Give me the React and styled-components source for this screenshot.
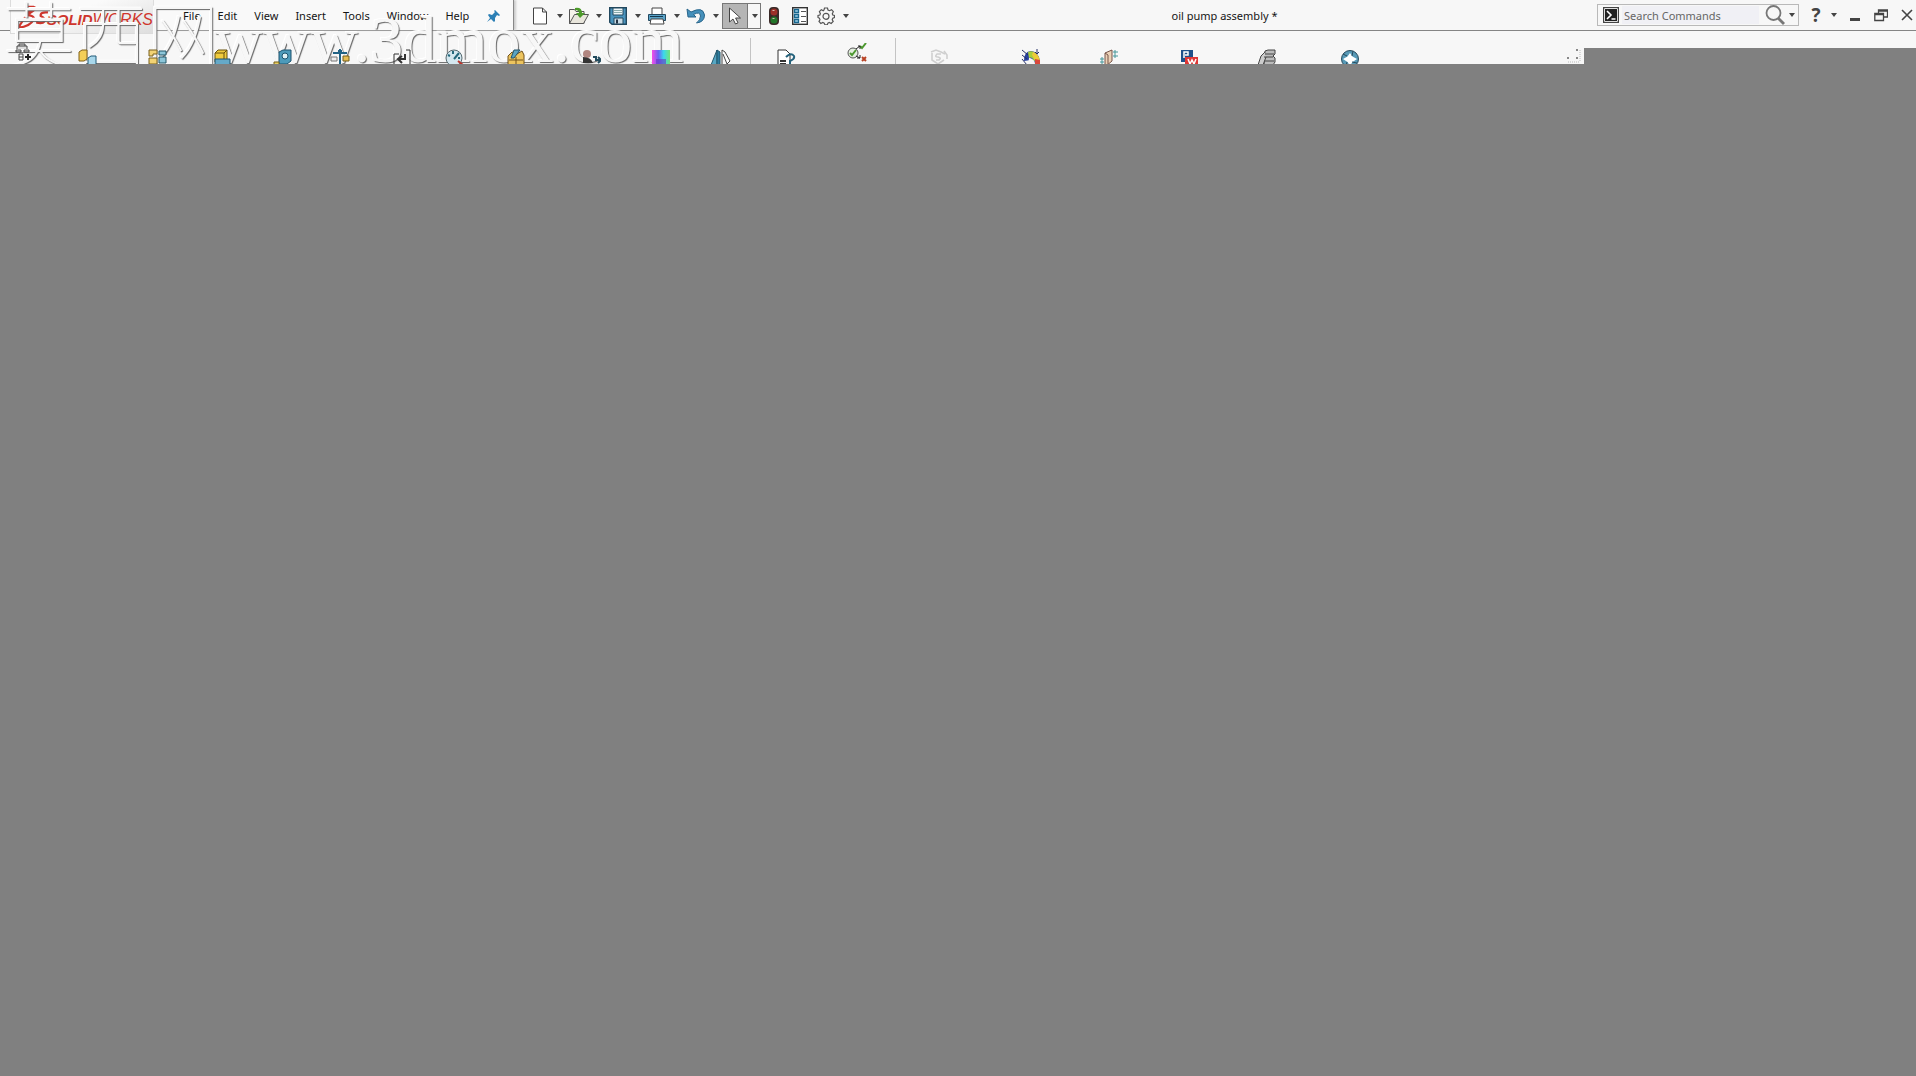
import React from "react";
import styled, { createGlobalStyle } from "styled-components";

const App = () => {
  return (
    <Page>
      <GlobalStyle />
      <Header>
        <Logo href="#home" aria-label="SolidWorks">
          <BrandMark />
          <Brand>
            <b>SOLID</b>
            <span>WORKS</span>
          </Brand>
        </Logo>
        <MenuBar>
          {menus.map((menu) => (
            <MenuButton key={menu}>{menu}</MenuButton>
          ))}
          <PinButton aria-label="Pin menu">
            <PinIcon />
          </PinButton>
        </MenuBar>

        <QuickTools>
          {quickTools.map(({ name, icon, active }) => (
            <Split key={name} $active={active}>
              <IconButton aria-label={name}>{icon}</IconButton>
              <Caret label={`${name} options`} />
            </Split>
          ))}
          <IconButton aria-label="Rebuild">{trafficIcon}</IconButton>
          <IconButton aria-label="File properties">{listIcon}</IconButton>
          <IconButton aria-label="Options">{gearIcon}</IconButton>
          <Caret label="Options menu" />
        </QuickTools>

        <Title>oil pump assembly *</Title>

        <SearchBox>
          {consoleIcon}
          <SearchInput aria-label="Search Commands" placeholder="Search Commands" />
          <SearchButton aria-label="Search">{searchIcon}</SearchButton>
          <Caret label="Search options" />
        </SearchBox>
        <HelpButton aria-label="Help">?</HelpButton>
        <Caret label="Help options" />
        <WindowButtons>
          <WindowButton aria-label="Minimize">
            <svg width="14" height="14">
              <path d="M2 11.5h10" stroke="#444" strokeWidth="3" />
            </svg>
          </WindowButton>
          <WindowButton aria-label="Restore">
            <svg width="14" height="14" fill="none" stroke="#444" strokeWidth="1.3">
              <path d="M4.5 5V2h9v7H10M4.5 3h9" />
              <path d="M.8 5.5h8.7v7H.8zM.8 6.5h8.7" />
            </svg>
          </WindowButton>
          <WindowButton aria-label="Close">
            <svg width="14" height="14">
              <path d="M2 2l10 10M12 2L2 12" stroke="#444" strokeWidth="1.6" />
            </svg>
          </WindowButton>
        </WindowButtons>
      </Header>

      <Ribbon>
        <RibbonTools>
          {ribbonTools.map((tool, i) =>
            tool.divider ? (
              <Divider key={i} $space={tool.space} />
            ) : (
              <RibbonButton
                key={i}
                aria-label={tool.name}
                $width={tool.width}
                $raised={tool.raised}
              >
                <svg width="20" height="20" viewBox="0 0 20 20" fill="none">
                  {tool.art}
                </svg>
              </RibbonButton>
            )
          )}
          <Grip width="18" height="16" viewBox="0 0 18 16">
            <path
              d="M10 1l2 2m0-2l-2 2M10 9l2 2m0-2l-2 2M1 9l2 2m0-2l-2 2"
              stroke="#888"
            />
            <path d="M14 2v12M2 14h12" stroke="#bbb" strokeDasharray="1 1" />
          </Grip>
        </RibbonTools>
        <Dock />
      </Ribbon>

      <Watermark>
        <span>莫西网</span>
        <span>www.3dmox.com</span>
      </Watermark>
    </Page>
  );
};

const Caret = ({ label }) => (
  <CaretButton aria-label={label}>
    <svg width="6" height="4">
      <path d="M0 0h6L3 4z" fill="#444" />
    </svg>
  </CaretButton>
);

const BrandMark = () => (
  <svg width="36" height="28" viewBox="0 0 36 28" fill="none" stroke="#cf352c">
    <path d="M8 3l9 0q4 1 0 4l-6 4M15 5l-5 6" strokeWidth="2.6" />
    <path d="M9 12q10 0 8 5-3 7-17 9l8-12" strokeWidth="2.4" />
    <path d="M33 9q-9-1-8 4 6 3 4 6-2 3-9 1" strokeWidth="2.4" />
    <path d="M16 14l7 7" strokeWidth="2" />
  </svg>
);

const PinIcon = () => (
  <svg width="14" height="14" viewBox="0 0 14 14">
    <path
      d="M8 1l5 5-1 1-2-1-2 3 0 3-1 1-3-3-4 3 3-4-2-3 1-1 3 1 3-3-1-1z"
      fill="#2b7fb5"
    />
  </svg>
);

const trafficIcon = (
  <svg width="14" height="20" viewBox="0 0 14 20">
    <rect x="2" y="1" width="10" height="18" rx="4" fill="#3a2a28" />
    <circle cx="7" cy="6" r="3.5" fill="#9b3028" />
    <circle cx="7" cy="14" r="3.5" fill="#23762a" />
    <path d="M5.5 4.5h2M5.5 12.5h2" stroke="#d7bdb0" />
  </svg>
);

const listIcon = (
  <svg width="16" height="18" viewBox="0 0 16 18" fill="none">
    <rect x=".7" y=".7" width="14.6" height="16.6" fill="#fff" stroke="#333" strokeWidth="1.4" />
    <path
      d="M2.5 2.5h4v3h-4zM2.5 7.5h4v3h-4zM2.5 12.5h4v3h-4z"
      fill="#a5d4ea"
      stroke="#17668e"
      strokeWidth="1.4"
    />
    <path d="M9 4.5h5M9 9.5h5M9 14.5h5" stroke="#555" />
  </svg>
);

const gearIcon = (
  <svg width="18" height="18" viewBox="0 0 18 18" fill="none" stroke="#555" strokeWidth="1.2">
    <path d="M7.5 1h3l.5 2 1.5.7 2-1 1.8 2-1 2 .5 1.3 1.7.5v2l-1.7.7-.6 1.5 1 1.8-2 2-2-1-1.3.6-.6 1.7H7.9l-.7-1.7-1.4-.6-2 1-1.8-2 1-1.9-.6-1.4L1 10.5v-2L2.9 8l.5-1.4-1-1.9 1.9-2 2 1L7 3z" />
    <circle cx="9" cy="9.3" r="3" />
  </svg>
);

const consoleIcon = (
  <svg width="16" height="16" viewBox="0 0 16 16" fill="none" aria-hidden="true">
    <rect x=".5" y=".5" width="15" height="15" fill="#222" stroke="#444" />
    <path d="M1.5 14.5v-13h13v13z" stroke="#ddd" />
    <path d="M4 4l4 4-4 4M8.500 12h4" stroke="#fff" strokeWidth="1.6" />
  </svg>
);

const searchIcon = (
  <svg width="20" height="20" viewBox="0 0 20 20" fill="none" stroke="#777">
    <circle cx="8.5" cy="8" r="7" strokeWidth="1.8" />
    <path d="M13 13l6 6" strokeWidth="2.8" />
  </svg>
);

const menus = ["File", "Edit", "View", "Insert", "Tools", "Window", "Help"];

const quickTools = [
  {
    name: "New",
    icon: (
      <svg width="16" height="18" viewBox="0 0 16 18">
        <path d="M1.5 1h9l4 4v12h-13zM10.500 1v4h4" fill="#fff" stroke="#444" />
      </svg>
    ),
  },
  {
    name: "Open",
    icon: (
      <svg width="22" height="18" viewBox="0 0 22 18">
        <path d="M1.5 16.5v-14h5l1.5 2h8v12z" fill="#f6f3ea" stroke="#555" />
        <path d="M1.5 16.5l5-9h14l-5 9z" fill="#e9e6dc" stroke="#555" />
        <path d="M7 1q7-1 7 5h3l-5 5-4-5h3q0-3-4-3z" fill="#4c9a2a" />
      </svg>
    ),
  },
  {
    name: "Save",
    icon: (
      <svg width="18" height="18" viewBox="0 0 18 18">
        <path d="M.7.7h16.6v16.6H3l-2.300-2z" fill="#4a94be" stroke="#22485f" strokeWidth="1.4" />
        <path d="M4 1h10v7H4z" fill="#eef6fa" stroke="#22485f" />
        <path d="M5 3.5h8M5 5.5h8" stroke="#8aa" />
        <path d="M5 11h9v6H5z" fill="#c9dbe6" stroke="#22485f" />
        <path d="M7 12.5h2v4H7z" fill="#234" />
      </svg>
    ),
  },
  {
    name: "Print",
    icon: (
      <svg width="20" height="18" viewBox="0 0 20 18">
        <path d="M5 7V1h10v6" fill="#fff" stroke="#444" />
        <path d="M1.5 7.5h17v6h-17z" fill="#5aa3c8" stroke="#22485f" />
        <path d="M3 9.5h13" stroke="#17384c" />
        <path d="M4 12h12l1 5H3z" fill="#fff" stroke="#444" />
      </svg>
    ),
  },
  {
    name: "Undo",
    icon: (
      <svg width="20" height="18" viewBox="0 0 20 18">
        <path
          d="M1 2l1 8h8L7.5 7.5Q14 4 14.5 9q0 4-4 7 8-1 8-8Q17-1 5 5z"
          fill="#4590bb"
          stroke="#28658b"
        />
      </svg>
    ),
  },
  {
    name: "Select",
    active: true,
    icon: (
      <svg width="14" height="18" viewBox="0 0 14 18">
        <path d="M1.5 1v14l3.5-3 2.5 5 2.5-1.2-2.4-4.8h4.9z" fill="#fff" stroke="#444" />
      </svg>
    ),
  },
];

// widths run from one icon's left edge to the next
const ribbonTools = [
  {
    name: "Edit component",
    width: 64,
    raised: true,
    art: (
      <g stroke="#444">
        <path d="M3 6V3h10v3M5 3V1h6v2M2 7h5v2H2zM10 7h5v2h-5z" fill="#ddd" />
        <path d="M5 11h4v6H5zM5 14h4" />
        <path d="M11 14h6M14 11v6" strokeWidth="2" stroke="#222" />
      </g>
    ),
  },
  {
    name: "Insert components",
    width: 70,
    art: (
      <g>
        <path d="M1 3l3-2h5v9l-3 2H1z" fill="#f3cf58" stroke="#806018" />
        <path d="M10 9l3-2h5v9h-8z" fill="#a8d7eb" stroke="#205b78" />
      </g>
    ),
  },
  {
    name: "Mate",
    width: 65,
    art: (
      <g>
        <path d="M1 1h8v4H5v2H1zM1 9h8v6H1z" fill="#f2d374" stroke="#78601e" />
        <path d="M11 2h7v4h-7zM11 8h7v6h-7z" fill="#8cc5d8" stroke="#235669" />
      </g>
    ),
  },
  {
    name: "Component preview",
    width: 60,
    art: (
      <g>
        <path d="M2 4l3-3h9v9l-3 3H2z" fill="#f0cb3c" stroke="#66500d" />
        <path d="M2 4h9v9M11 4l3-3" stroke="#66500d" />
        <path d="M2 10h15v8H2z" fill="#65a9c8" stroke="#23536b" />
      </g>
    ),
  },
  {
    name: "Linear pattern",
    width: 57,
    art: (
      <g>
        <path d="M6 3l4-2h8v11l-4 3H6z" fill="#4d9aba" stroke="#1c536e" />
        <circle cx="12" cy="7" r="3" fill="#dff0f4" stroke="#1c536e" />
        <path d="M1 13h5v3H1z" fill="#e8cf60" stroke="#775f18" />
      </g>
    ),
  },
  {
    name: "Smart fasteners",
    width: 62,
    art: (
      <g>
        <path d="M10 0v18M3 4h14M8 2h4" stroke="#216385" strokeWidth="2" />
        <path d="M1 8h6v4H1z" fill="#eee" stroke="#777" />
        <path d="M13 7h6v5h-6z" fill="#e5bd53" stroke="#775f18" />
      </g>
    ),
  },
  {
    name: "Move component",
    width: 52,
    art: (
      <g stroke="#333">
        <path d="M2 16V5h5M14 1h4v15h-4" />
        <path d="M13 5v5H7m3-3l-4 3 4 4" strokeWidth="2" />
      </g>
    ),
  },
  {
    name: "Performance",
    width: 62,
    art: (
      <g>
        <circle cx="10" cy="9" r="8" fill="#d4e7ef" stroke="#546970" />
        <path d="M10 10l5-6M4 6l2 1M9 2v3M16 9h-2" stroke="#24697d" strokeWidth="2" />
        <path d="M14 12l5 4" stroke="#bd352c" strokeWidth="2" />
      </g>
    ),
  },
  {
    name: "Assembly features",
    width: 75,
    art: (
      <g>
        <path d="M2 7l4-4 5 2 5-3 2 4v11H2z" fill="#edc45e" stroke="#72521c" />
        <path d="M8 1h6L8 9H5z" fill="#5ba4c2" stroke="#235368" />
        <path d="M3 11h14M10 8v9" stroke="#72521c" />
      </g>
    ),
  },
  {
    name: "Motion study",
    width: 70,
    art: (
      <g>
        <circle cx="6" cy="5" r="4" fill="#b18680" />
        <path d="M2 8q8 0 10 6H2z" fill="#333" />
        <path d="M12 8h3v3h4m-2-3l3 3-3 3" stroke="#234b5d" strokeWidth="2" />
      </g>
    ),
  },
  {
    name: "Appearance",
    width: 60,
    art: (
      <g>
        <defs>
          <linearGradient id="hue">
            <stop stopColor="#f94ce5" />
            <stop offset=".35" stopColor="#6b61f4" />
            <stop offset=".65" stopColor="#3bd9ec" />
            <stop offset="1" stopColor="#72e37a" />
          </linearGradient>
        </defs>
        <path d="M1 1h18v16H1z" fill="url(#hue)" />
        <path d="M5 10h10v7H5z" fill="#6b33c2" opacity=".6" />
      </g>
    ),
  },
  {
    name: "Mirror",
    width: 39,
    art: (
      <g>
        <path d="M0 16L6 1v15z" fill="#56a7c4" stroke="#24586d" />
        <path d="M6 1l3 2v13H6z" fill="#2f7d9f" stroke="#24586d" />
        <path d="M11 1v14M11 1l3 2 5 9-3 3-4-10" fill="#fff" stroke="#444" />
      </g>
    ),
  },
  { divider: true, space: 25 },
  {
    name: "Check document",
    width: 71,
    art: (
      <g>
        <path d="M2 16V1h8l4 4v12z" fill="#fff" stroke="#333" />
        <path d="M4 12h6M4 15h6" stroke="#333" strokeWidth="2" />
        <path d="M10 8q5-5 8-1 1 3-4 5v3" stroke="#24627c" strokeWidth="2" />
      </g>
    ),
  },
  {
    name: "Evaluate",
    width: 48,
    raised: true,
    art: (
      <g>
        <circle cx="6" cy="10" r="5" fill="#e4eee0" stroke="#555" />
        <path d="M3 10l2 2 4-5M13 3l2 2 4-5" stroke="#4c982f" strokeWidth="2" />
        <path d="M9 6l4-3M9 13l4 2M11 3h2v3M13 12v3h-3" stroke="#222" />
        <path d="M15 14l4 4m0-4l-4 4" stroke="#b84224" strokeWidth="2" />
      </g>
    ),
  },
  { divider: true, space: 33 },
  {
    name: "Reload",
    width: 92,
    art: (
      <g stroke="#cfcfcf" strokeWidth="1.6">
        <path d="M2 3l5-2 5 2 4 2M3 4v7l6 4 6-4" />
        <path d="M12 5H8q-3 3 1 3 4 1 1 3H7" />
        <path d="M15 2l3 4v4" />
      </g>
    ),
  },
  {
    name: "Render",
    width: 78,
    art: (
      <g>
        <path d="M3 12Q3 2 10 2t9 10v5h-5q0-8-4-6z" fill="#2942a0" />
        <path d="M7 3q7-3 11 7l-5 2q-2-5-5-3z" fill="#a9cf3c" />
        <path d="M12 3q6 2 7 9l-5-1-3-5z" fill="#eecb38" />
        <path d="M14 10l5 1v6h-5z" fill="#d9473a" />
        <path d="M8 9q4-1 6 7H7z" fill="#f5f5f5" />
        <path d="M1 1l6 5M1 6l5 4M1 10l5 6M16 0v4M14 3l2 2 2-2" stroke="#252f66" />
      </g>
    ),
  },
  {
    name: "Simulation",
    width: 81,
    art: (
      <g>
        <path d="M6 4l7-3v11l-7 6z" fill="#ead0b6" stroke="#765449" />
        <path d="M6 4l3 2v9" stroke="#765449" />
        <path d="M14 3h5M14 7h5M16 1v8M1 10h4M1 13h4M3 8v7" stroke="#47979a" />
      </g>
    ),
  },
  {
    name: "PhotoWorks",
    width: 77,
    art: (
      <g>
        <path d="M1 1h12v12H1z" fill="#1e518a" />
        <path d="M4 9V3h4v3H5" stroke="#fff" strokeWidth="1.5" />
        <path d="M5 8h13v12H5z" fill="#df3735" />
        <path d="M8 10l2 5 2-4 2 4 2-5" stroke="#fff" strokeWidth="1.5" />
      </g>
    ),
  },
  {
    name: "Toolbox",
    width: 83,
    art: (
      <g>
        <path d="M8 2l3-1h7v4l-2 2 2 2v4l-2 3H7z" fill="#bbb" stroke="#444" />
        <path d="M8 3L4 7l-3 9h5l3-8M8 5h9M7 8h9M8 12h9" fill="#ccc" stroke="#444" />
      </g>
    ),
  },
  {
    name: "Flow",
    width: 40,
    art: (
      <g>
        <circle cx="10" cy="10" r="8.5" fill="#5799b6" stroke="#294b5d" />
        <path d="M10 4l2.500 3.500L17 10l-4.500 3L10 17l-2.500-4L3 10l4.500-2.500z" fill="#fff" />
        <path d="M3 5l4 2M13 2l-1 5M17 14l-5-1M6 17l1-4" stroke="#294b5d" />
      </g>
    ),
  },
];

const GlobalStyle = createGlobalStyle`
  * {
    box-sizing: border-box;
  }

  body {
    margin: 0;
    background: #808080;
  }

  button {
    border: 0;
    padding: 0;
    background: none;
    color: inherit;
    font: inherit;
  }
`;

const Page = styled.div`
  position: relative;
  min-height: 100vh;
  overflow: hidden;
  color: #151515;
  font: 11px/16px "Noto Sans", "Open Sans", sans-serif;
`;

const Header = styled.header`
  display: flex;
  align-items: center;
  height: 31px;
  padding-left: 10px;
  background: #f7f7f7;
  border-bottom: 1px solid #858585;
`;

const Logo = styled.a`
  display: flex;
  align-items: center;
  align-self: flex-start;
  flex-shrink: 0;
  width: 144px;
  height: 34px;
  padding-left: 7px;
  color: #cf352c;
  text-decoration: none;
  background: linear-gradient(160deg, #fafafa 40%, #dedede);
  border: 1px solid #dcdcdc;
  border-top: 0;
  z-index: 1;
`;

const Brand = styled.span`
  margin-left: -4px;
  padding-top: 6px;
  font: italic 15px/16px "Liberation Sans", sans-serif;

  span {
    font-family: "Liberation Sans Narrow", "Liberation Sans", sans-serif;
    font-size: 16px;
  }
`;

const MenuBar = styled.nav`
  display: flex;
  align-items: center;
  align-self: stretch;
  width: 360px;
  gap: 17px;
  padding: 2px 0 0 29px;
  background: #f9f9f9;
  border-right: 1px solid #888;
  box-shadow: 2px 0 2px #ccc;
`;

const MenuButton = styled.button`
  white-space: nowrap;
`;

const PinButton = styled.button`
  display: flex;
  margin: 0 12px 0 auto;
`;

const QuickTools = styled.div`
  display: flex;
  align-items: center;
  padding: 2px 0 0 13px;
`;

const Split = styled.div`
  display: flex;
  height: 26px;
  outline: ${(p) => (p.$active ? "1px solid #777" : "none")};
  outline-offset: -1px;

  & > button:first-child {
    background: ${(p) => (p.$active ? "#b5b5b5" : "none")};
    border-right: ${(p) => (p.$active ? "1px solid #777" : "0")};
  }
`;

const IconButton = styled.button`
  display: flex;
  align-items: center;
  justify-content: center;
  width: 26px;
  height: 26px;
`;

const CaretButton = styled.button`
  display: flex;
  align-items: center;
  justify-content: center;
  width: 13px;
  height: 26px;
`;

const Title = styled.h1`
  flex: 1;
  margin: 0;
  padding-top: 2px;
  font: inherit;
  text-align: center;
`;

const SearchBox = styled.div`
  display: flex;
  align-items: center;
  width: 202px;
  height: 22px;
  padding-left: 5px;
  border: 1px solid #b9b9b9;
  background: #f7f7f7;
`;

const SearchInput = styled.input`
  flex: 1;
  min-width: 0;
  height: 18px;
  margin-left: 3px;
  padding: 1px 2px 0;
  border: 0;
  background: #f0f0f5;
  font: inherit;

  &::placeholder {
    color: #666;
    opacity: 1;
  }
`;

const SearchButton = styled.button`
  display: flex;
  margin: 0 0 0 6px;
`;

const HelpButton = styled.button`
  width: 34px;
  margin-right: -6px;
  color: #444;
  font: bold 19px/24px "Open Sans", sans-serif;
`;

const WindowButtons = styled.div`
  display: flex;
  gap: 12px;
  padding: 0 2px 0 8px;
`;

const WindowButton = styled.button`
  display: flex;
  width: 14px;
`;

const Ribbon = styled.div`
  display: flex;
  align-items: flex-end;
  height: 33px;
  overflow: hidden;
  background: #f7f7f7;
`;

const RibbonTools = styled.div`
  display: flex;
  flex: 1;
  height: 33px;
  padding-left: 14px;
`;

const RibbonButton = styled.button`
  display: flex;
  flex-shrink: 0;
  width: ${(p) => p.$width}px;
  padding-top: ${(p) => (p.$raised ? 12 : 18)}px;
  z-index: 3;
`;

const Divider = styled.div`
  width: 1px;
  height: 26px;
  margin: 7px ${(p) => p.$space}px 0 0;
  background: #c4c4c4;
`;

const Grip = styled.svg`
  margin: auto 0 0 auto;
`;

const Dock = styled.div`
  width: 332px;
  height: 16px;
  background: #808080;
`;

const Watermark = styled.div`
  position: absolute;
  top: 0;
  left: 3px;
  z-index: 2;
  display: flex;
  align-items: flex-start;
  height: 64px;
  overflow: hidden;
  color: #f7f7f7;
  font: 100 72px/76px "Liberation Serif", "Noto Sans CJK SC", serif;
  text-shadow: 1px 1px 1px #666, -1px -1px 0 #fff;
  white-space: nowrap;
  pointer-events: none;

  span + span {
    margin-left: -4px;
    font-size: 66px;
    line-height: 80px;
  }
`;

export default App;
